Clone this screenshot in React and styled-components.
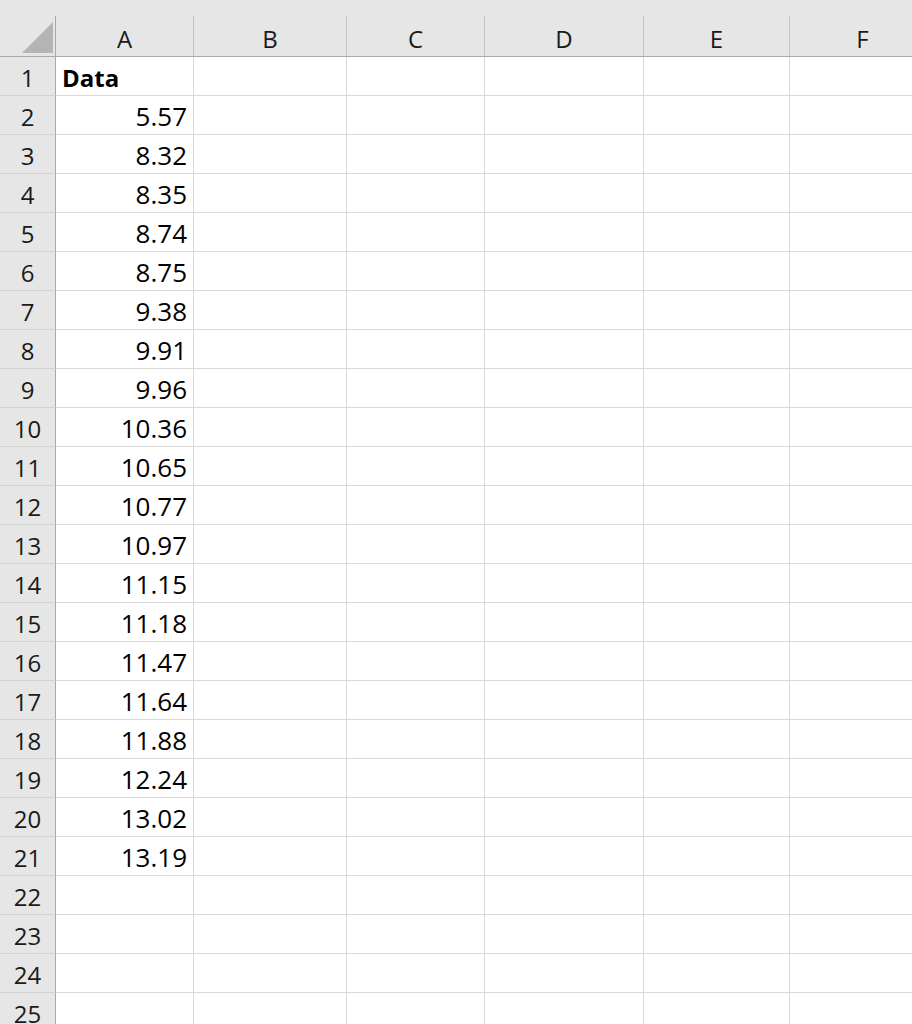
import React from "react";
import styled, { createGlobalStyle } from "styled-components";

const GlobalStyle = createGlobalStyle`
  html, body {
    margin: 0;
    padding: 0;
    background: #ffffff;
    overflow: hidden;
  }
  body {
    font-family: "Open Sans", "Noto Sans", sans-serif;
  }
`;

const COLUMNS = ["A", "B", "C", "D", "E", "F"];
const WIDTHS = [138, 153, 138, 159, 146, 146];
const DATA = [
  "5.57", "8.32", "8.35", "8.74", "8.75", "9.38", "9.91", "9.96", "10.36",
  "10.65", "10.77", "10.97", "11.15", "11.18", "11.47", "11.64", "11.88",
  "12.24", "13.02", "13.19",
];
const ROW_COUNT = 25;

const Sheet = styled.div`
  display: grid;
  grid-template-columns: 56px ${WIDTHS.map((w) => `${w}px`).join(" ")};
  grid-auto-rows: 39px;
  grid-template-rows: 57px;
  width: max-content;
  height: 1024px;
  overflow: hidden;
`;

const HeaderCell = styled.div`
  box-sizing: border-box;
  background: #e6e6e6;
  border-bottom: 1px solid #a9a9a9;
  padding-top: 16px;
  display: flex;
`;

const HeaderLabel = styled.div`
  flex: 1;
  box-sizing: border-box;
  border-right: 1px solid ${(p) => (p.$corner ? "#a9a9a9" : "#c3c3c3")};
  display: flex;
  justify-content: ${(p) => (p.$corner ? "flex-end" : "center")};
  align-items: ${(p) => (p.$corner ? "flex-end" : "center")};
  padding: ${(p) => (p.$corner ? "0 2px 3px 0" : "4px 0 0 0")};
  font-size: 24px;
  color: #1a1a1a;
`;

const RowHeader = styled.div`
  box-sizing: border-box;
  background: #e6e6e6;
  border-right: 1px solid #a9a9a9;
  border-bottom: 1px solid #d2d2d2;
  display: flex;
  align-items: center;
  justify-content: center;
  padding-top: 2px;
  font-size: 24px;
  color: #1a1a1a;
`;

const Cell = styled.div`
  box-sizing: border-box;
  border-right: 1px solid #d9d9d9;
  border-bottom: 1px solid #d9d9d9;
  display: flex;
  align-items: center;
  justify-content: ${(p) => (p.$number ? "flex-end" : "flex-start")};
  padding: 2px 6px 0 6px;
  font-size: ${(p) => (p.$bold ? "24px" : "26px")};
  font-weight: ${(p) => (p.$bold ? 700 : 400)};
  color: #000000;
  white-space: nowrap;
`;

function Corner() {
  return (
    <HeaderCell>
      <HeaderLabel $corner>
        <svg width="31" height="31" viewBox="0 0 31 31">
          <polygon points="31,0 31,31 0,31" fill="#b4b4b4" />
        </svg>
      </HeaderLabel>
    </HeaderCell>
  );
}

export default function App() {
  const rows = [];
  for (let r = 1; r <= ROW_COUNT; r++) {
    rows.push(<RowHeader key={`h${r}`}>{r}</RowHeader>);
    COLUMNS.forEach((c, i) => {
      let content = null;
      let isNumber = false;
      let isBold = false;
      if (i === 0 && r === 1) {
        content = "Data";
        isBold = true;
      } else if (i === 0 && DATA[r - 2]) {
        content = DATA[r - 2];
        isNumber = true;
      }
      rows.push(
        <Cell key={`${c}${r}`} $number={isNumber} $bold={isBold}>
          {content}
        </Cell>
      );
    });
  }

  return (
    <>
      <GlobalStyle />
      <Sheet>
        <Corner />
        {COLUMNS.map((c) => (
          <HeaderCell key={c}>
            <HeaderLabel>{c}</HeaderLabel>
          </HeaderCell>
        ))}
        {rows}
      </Sheet>
    </>
  );
}
